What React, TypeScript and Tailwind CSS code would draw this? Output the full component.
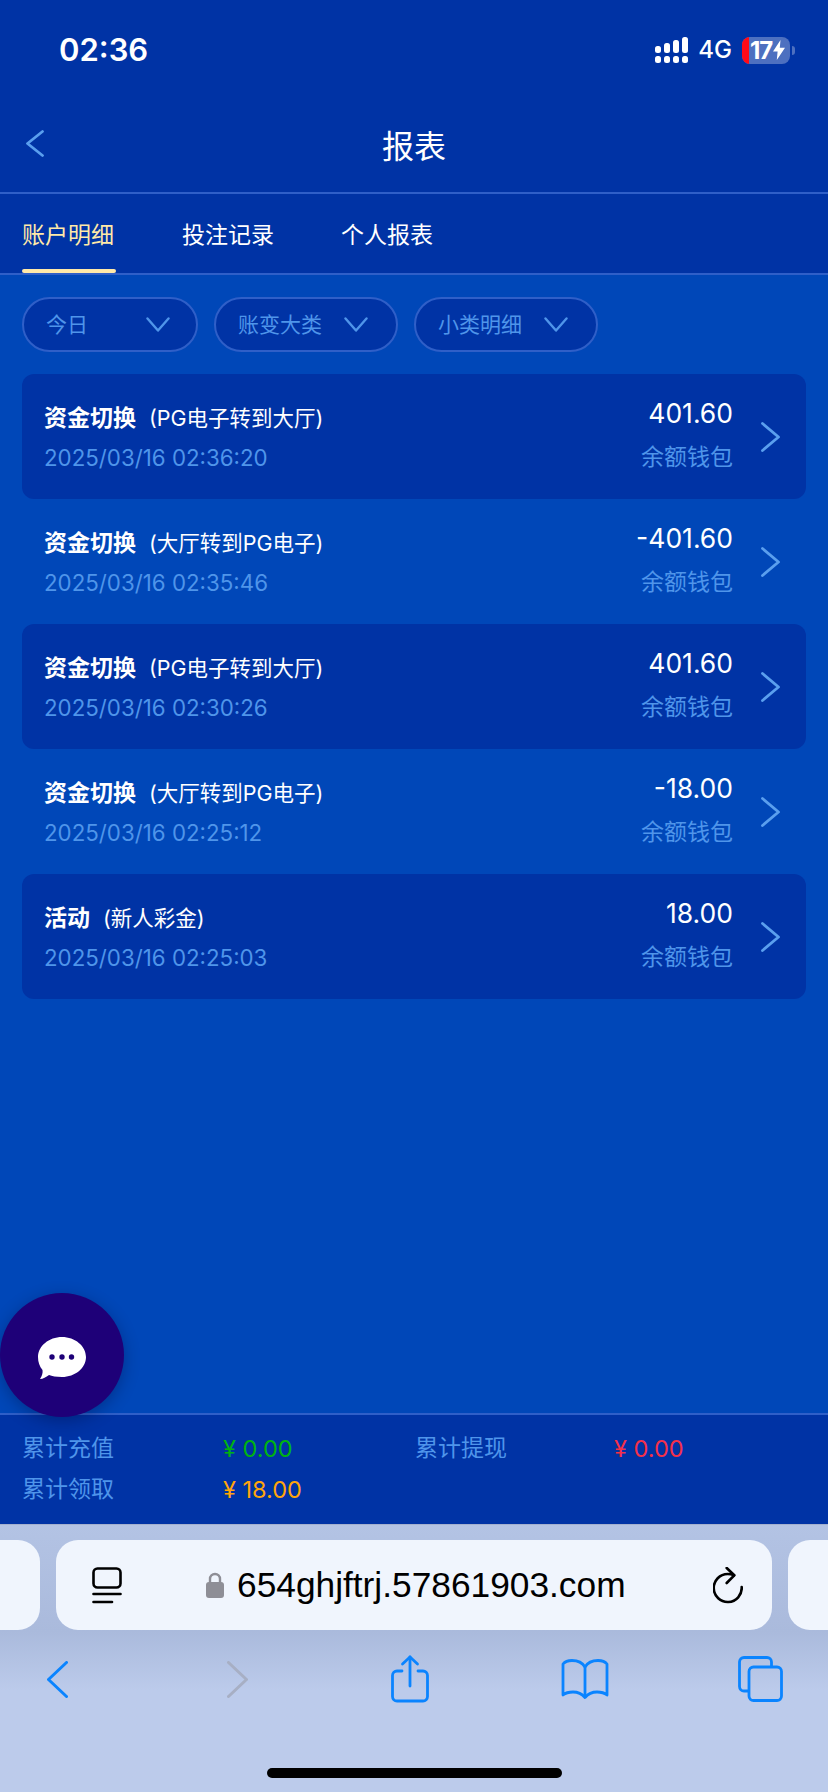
const font = "font-['Inter','Noto_Sans_CJK_SC',sans-serif]";

const rows = [
  { title: '资金切换', sub: '(PG电子转到大厅)', date: '2025/03/16 02:36:20', amount: '401.60', dark: true },
  { title: '资金切换', sub: '(大厅转到PG电子)', date: '2025/03/16 02:35:46', amount: '-401.60', dark: false },
  { title: '资金切换', sub: '(PG电子转到大厅)', date: '2025/03/16 02:30:26', amount: '401.60', dark: true },
  { title: '资金切换', sub: '(大厅转到PG电子)', date: '2025/03/16 02:25:12', amount: '-18.00', dark: false },
  { title: '活动', sub: '(新人彩金)', date: '2025/03/16 02:25:03', amount: '18.00', dark: true },
];

function Chevron({ dir, color, w, h, sw }: { dir: 'left' | 'right' | 'down'; color: string; w: number; h: number; sw: number }) {
  const d =
    dir === 'left'
      ? `M${w - 1.5} 1.5L1.5 ${h / 2}L${w - 1.5} ${h - 1.5}`
      : dir === 'right'
        ? `M1.5 1.5L${w - 1.5} ${h / 2}L1.5 ${h - 1.5}`
        : `M1.5 1.5L${w / 2} ${h - 1.5}L${w - 1.5} 1.5`;
  return (
    <svg width={w} height={h} viewBox={`0 0 ${w} ${h}`} fill="none" className="shrink-0">
      <path d={d} stroke={color} strokeWidth={sw} strokeLinecap="round" strokeLinejoin="round" />
    </svg>
  );
}

function StatusBar() {
  return (
    <div className="h-[101px] flex justify-between pl-[59px] pr-[33px] pt-[28px] items-start">
      <span className="text-[31px] leading-[44px] font-semibold text-white">02:36</span>
      <div className="flex items-center mt-[8px]">
        <svg width="33" height="26" viewBox="0 0 33 26" fill="white">
          <rect x="0" y="9" width="6" height="7" rx="2.5" />
          <rect x="9" y="6" width="6" height="10" rx="2.5" />
          <rect x="18" y="3" width="6" height="13" rx="2.5" />
          <rect x="27" y="0" width="6" height="16" rx="2.5" />
          <rect x="0" y="19" width="6" height="7" rx="2.5" />
          <rect x="9" y="19" width="6" height="7" rx="2.5" />
          <rect x="18" y="19" width="6" height="7" rx="2.5" />
          <rect x="27" y="19" width="6" height="7" rx="2.5" />
        </svg>
        <span className="ml-[10px] text-[24px] leading-[28px] font-medium text-white">4G</span>
        <div className="ml-[10px] relative w-[48px] h-[27px] rounded-[8px] bg-[#4d70c0] overflow-hidden flex items-center">
          <div className="w-[7px] h-full bg-[#ff0a18]" />
          <span className="ml-[1px] text-[24px] leading-[27px] font-bold text-white tracking-[-1px]">17</span>
          <svg width="12" height="20" viewBox="0 0 12 20" fill="white" className="ml-[1px]">
            <path d="M7.5 0L0 11.5h4.6L3.8 20 12 7.8H6.8z" />
          </svg>
        </div>
        <div className="ml-[2px] w-[3px] h-[9px] rounded-r-[3px] bg-[#4d70c0]" />
      </div>
    </div>
  );
}

function ChipFilter({ label, wide, gap }: { label: string; wide: string; gap: string }) {
  return (
    <div className={`${wide} h-[55px] rounded-[28px] border-2 border-[#2f5fc8] bg-[#0033a5] flex items-center pl-[22px] text-[21px] text-[#4f95ea]`}>
      <span className={gap}>{label}</span>
      <Chevron dir="down" color="#4f95ea" w={24} h={15} sw={2.4} />
    </div>
  );
}

function Row({ r }: { r: (typeof rows)[number] }) {
  return (
    <div className={`h-[125px] rounded-[12px] flex items-start pl-[22px] pr-[26px] ${r.dark ? 'bg-[#0033a5]' : ''}`}>
      <div className="flex-1 pt-[28px]">
        <div className="flex items-center h-[32px]">
          <span className="text-[23px] leading-[32px] font-bold text-white">{r.title}</span>
          <span className="ml-[13px] text-[21.5px] leading-[32px] text-white">{r.sub}</span>
        </div>
        <div className="mt-[8px] text-[22.3px] leading-[32px] text-[#4f95ea]">{r.date}</div>
      </div>
      <div className="flex flex-col items-end pt-[22px]">
        <span className="text-[26.5px] leading-[34px] text-white">{r.amount}</span>
        <span className="mt-[11px] text-[23px] leading-[32px] text-[#4f95ea]">余额钱包</span>
      </div>
      <div className="ml-[28px] self-center">
        <Chevron dir="right" color="#5a9fee" w={19} h={30} sw={2.8} />
      </div>
    </div>
  );
}

function Summary() {
  return (
    <div className="h-[111px] shrink-0 bg-[#0033a5] border-t-2 border-[#2f5fc8] pl-[22px] pt-[13px] text-[23.5px] leading-[41px]">
      <div className="grid grid-cols-[201px_192px_199px_1fr]">
        <span className="text-[#4f95ea] text-[23px]">累计充值</span>
        <span className="text-[#00b30f]">¥ 0.00</span>
        <span className="text-[#4f95ea] text-[23px]">累计提现</span>
        <span className="text-[#f4304a]">¥ 0.00</span>
        <span className="text-[#4f95ea] text-[23px]">累计领取</span>
        <span className="text-[#ffa50a]">¥ 18.00</span>
      </div>
    </div>
  );
}

function ChatButton() {
  return (
    <div className="absolute left-0 top-[1293px] w-[124px] h-[124px] rounded-full bg-[#1e0078] shadow-[0_4px_16px_rgba(0,0,40,0.3)] flex items-center justify-center">
      <svg width="48" height="42" viewBox="0 0 48 42" fill="white" className="mt-[6px]">
        <path d="M24 0C37 0 48 9 48 20C48 31 37 40 24 40C18 40 14 39 11 38C8 40 5 42 2 42C4 39 5 36 4.500 33C1.500 29.500 0 25 0 20C0 9 11 0 24 0Z" />
        <circle cx="14" cy="20" r="2.700" fill="#1e0078" />
        <circle cx="24" cy="20" r="2.700" fill="#1e0078" />
        <circle cx="33.500" cy="20" r="2.700" fill="#1e0078" />
      </svg>
    </div>
  );
}

function SafariBar() {
  const blue = '#0a84ff';
  return (
    <div className="h-[268px] shrink-0 border-t border-[#a3b0cf] bg-gradient-to-b from-[#b3c3e4] via-[#aabadc] via-[40%] to-[#bccbeb] to-[62%] flex flex-col">
      <div className="flex gap-[16px] mt-[15px] h-[90px] ml-[-674px]">
        <div className="w-[714px] shrink-0 rounded-[22px] bg-[#f0f5fd]" />
        <div className="w-[716px] shrink-0 rounded-[22px] bg-[#f0f5fd] flex items-center pl-[36px] pr-[29px]">
          <svg width="30" height="37" viewBox="0 0 30 37" fill="none" stroke="black" strokeWidth="2.6" strokeLinecap="round">
            <rect x="1.5" y="1.5" width="27" height="19" rx="4" />
            <path d="M1.5 27H28.5" />
            <path d="M1.5 35H20" />
          </svg>
          <svg width="18" height="26" viewBox="0 0 18 26" className="ml-[84px] shrink-0">
            <path d="M4 11V7a5 5 0 0 1 10 0v4" fill="none" stroke="#8e8e96" strokeWidth="2.4" />
            <rect x="0" y="10" width="18" height="16" rx="3" fill="#8e8e96" />
          </svg>
          <span className="ml-[13px] text-[35.3px] leading-[44px] text-black font-['Liberation_Sans',sans-serif] whitespace-nowrap">654ghjftrj.57861903.com</span>
          <svg width="30" height="37" viewBox="0 0 30 37" fill="none" stroke="black" strokeWidth="2.6" strokeLinecap="round" strokeLinejoin="round" className="ml-auto">
            <path d="M21 8.300C19 7.500 17 7 14.700 7A14 14 0 1 0 28.700 20" />
            <path d="M13.700 1L21.300 8.300L13.700 16" />
          </svg>
        </div>
        <div className="w-[100px] shrink-0 rounded-[22px] bg-[#f0f5fd]" />
      </div>
      <div className="flex items-center h-[52px] mt-[23px] pl-[47px]">
        <Chevron dir="left" color={blue} w={21} h={37} sw={3} />
        <div className="ml-[159px]">
          <Chevron dir="right" color="#a7afc4" w={21} h={37} sw={3} />
        </div>
        <svg width="38" height="48" viewBox="0 0 38 48" fill="none" stroke={blue} strokeWidth="2.8" strokeLinecap="round" strokeLinejoin="round" className="ml-[143px]">
          <path d="M11 16H6a4.500 4.500 0 0 0-4.500 4.500v21A4.500 4.500 0 0 0 6 46h26a4.500 4.500 0 0 0 4.500-4.500v-21A4.500 4.500 0 0 0 32 16h-5" />
          <path d="M19 31V2" />
          <path d="M11.500 9L19 2l7.500 7" />
        </svg>
        <svg width="48" height="40" viewBox="0 0 48 40" fill="none" stroke={blue} strokeWidth="2.8" strokeLinejoin="round" className="ml-[132px]">
          <path d="M24 8C21 3 16 1.500 11 1.500C7 1.500 4 2.500 2 5V36C5 33.500 8 33 12 33C17 33 21 35 24 38.500C27 35 31 33 36 33C40 33 43 33.500 46 36V5C44 2.500 41 1.500 37 1.500C32 1.500 27 3 24 8Z" />
          <path d="M24 8V38" />
        </svg>
        <svg width="45" height="46" viewBox="0 0 45 46" fill="none" stroke={blue} strokeWidth="2.8" className="ml-[129px]">
          <path d="M10 35H6a4.500 4.500 0 0 1-4.500-4.500V6A4.500 4.500 0 0 1 6 1.500h23A4.500 4.500 0 0 1 33.500 6v5" />
          <rect x="11" y="11" width="32.500" height="33.500" rx="4.500" />
        </svg>
      </div>
      <div className="mt-[63px] mx-auto w-[295px] h-[10px] rounded-full bg-black" />
    </div>
  );
}

export default function App() {
  return (
    <div className={`relative w-[828px] h-[1792px] overflow-hidden flex flex-col bg-[#0047b8] ${font}`}>
      <div className="bg-[#0033a5] shrink-0">
        <StatusBar />
        <div className="h-[93px] border-b-2 border-[#2f5fc8] flex items-center relative pb-[6px]">
          <div className="ml-[26px]">
            <Chevron dir="left" color="#5a9fee" w={18} h={27} sw={2.8} />
          </div>
          <span className="absolute left-0 right-0 top-[26px] text-center text-[32px] leading-[40px] text-white">报表</span>
        </div>
        <div className="h-[81px] border-b-2 border-[#2f5fc8] flex gap-[67px] pl-[22px] text-[23px] text-white">
          <div className="relative w-[93px] pt-[24px] leading-[34px] text-[#ffe9a8] whitespace-nowrap">
            账户明细
            <div className="absolute left-0 bottom-0 w-[94px] h-[4px] rounded-[2px] bg-[#ffe9a8]" />
          </div>
          <div className="pt-[24px] leading-[34px]">投注记录</div>
          <div className="pt-[24px] leading-[34px]">个人报表</div>
        </div>
      </div>
      <div className="flex-1 min-h-0 px-[22px]">
        <div className="flex gap-[16px] mt-[22px]">
          <ChipFilter label="今日" wide="w-[176px]" gap="w-[100px]" />
          <ChipFilter label="账变大类" wide="w-[184px]" gap="w-[106px]" />
          <ChipFilter label="小类明细" wide="w-[184px]" gap="w-[106px]" />
        </div>
        <div className="mt-[22px]">
          {rows.map((r) => (
            <Row key={r.date} r={r} />
          ))}
        </div>
      </div>
      <Summary />
      <SafariBar />
      <ChatButton />
    </div>
  );
}
